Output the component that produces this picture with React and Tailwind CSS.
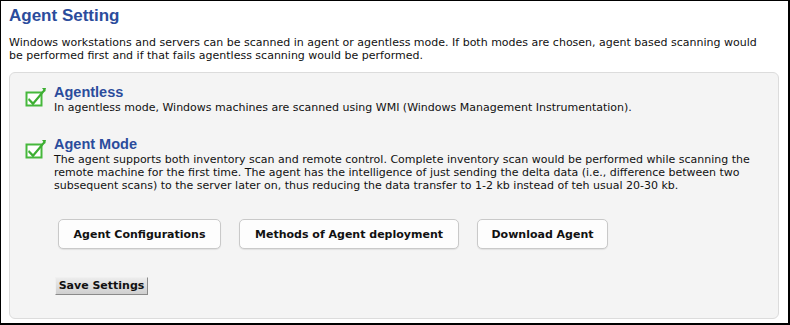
import React from "react";

function CheckIcon() {
    return (
        <svg width="22" height="20" viewBox="0 0 22 20" className="shrink-0">
            <rect x="1.5" y="5.5" width="15" height="13" fill="#fff" stroke="#46b83c" strokeWidth="2" />
            <path d="M4 11 L8 15 L19 2 L20.5 3.5 L8 18.5 L3 13 Z" fill="#3cae32" />
            <path d="M17 1 L21 1 L20 5 Z" fill="#3cae32" />
        </svg>
    );
}

function Mode({ title, children }) {
    return (
        <div className="flex gap-[7px]">
            <div className="pt-[2px]">
                <CheckIcon />
            </div>
            <div>
                <div className="font-['Liberation_Sans',sans-serif] font-bold text-[14.5px] leading-[15px] text-[#2b4c9c]">
                    {title}
                </div>
                <p className="mt-[1px]">{children}</p>
            </div>
        </div>
    );
}

const btn =
    "h-[30px] px-[13px] rounded-[5px] border border-[#c9c9c9] bg-[#fdfdfd] font-bold text-[11px] text-[#111] shadow-[0_1px_1px_rgba(0,0,0,0.08)]";

export default function App() {
    return (
        <div className="w-[790px] h-[325px] bg-white border-t border-l border-r-2 border-b-2 border-black font-['DejaVu_Sans',Verdana,sans-serif] text-[11px] leading-[13px] text-[#111] pl-[8px] pr-[8px] overflow-hidden">
            <h1 className="font-['Liberation_Sans',sans-serif] font-bold text-[17px] leading-[20px] text-[#2b4c9c] pt-[5px]">
                Agent Setting
            </h1>
            <p className="mt-[10px] pr-[8px]">
                Windows workstations and servers can be scanned in agent or agentless mode. If both modes are chosen, agent based scanning would be performed first and if that fails agentless scanning would be performed.
            </p>
            <div className="mt-[10px] h-[247px] mr-[1px] rounded-[6px] border border-[#dcdcdc] bg-[#f4f4f4] pl-[15px] pr-[10px] pt-[12px]">
                <Mode title="Agentless">
                    In agentless mode, Windows machines are scanned using WMI (Windows Management Instrumentation).
                </Mode>
                <div className="mt-[23px]">
                    <Mode title="Agent Mode">
                        The agent supports both inventory scan and remote control. Complete inventory scan would be performed while scanning the remote machine for the first time. The agent has the intelligence of just sending the delta data (i.e., difference between two subsequent scans) to the server later on, thus reducing the data transfer to 1-2 kb instead of teh usual 20-30 kb.
                    </Mode>
                </div>
                <div className="flex gap-[18px] pl-[33px] mt-[27px]">
                    <button className={`${btn} w-[163px]`}>Agent Configurations</button>
                    <button className={`${btn} w-[220px]`}>Methods of Agent deployment</button>
                    <button className={`${btn} w-[131px]`}>Download Agent</button>
                </div>
                <div className="pl-[30px] mt-[28px]">
                    <button className="h-[18px] w-[93px] border border-t-[#f0f0f0] border-l-[#f0f0f0] border-r-[#8a8a8a] border-b-[#8a8a8a] bg-gradient-to-b from-[#ececec] to-[#cfcfcf] font-bold text-[11px] leading-[14px] text-[#111]">
                        Save Settings
                    </button>
                </div>
            </div>
        </div>
    );
}
